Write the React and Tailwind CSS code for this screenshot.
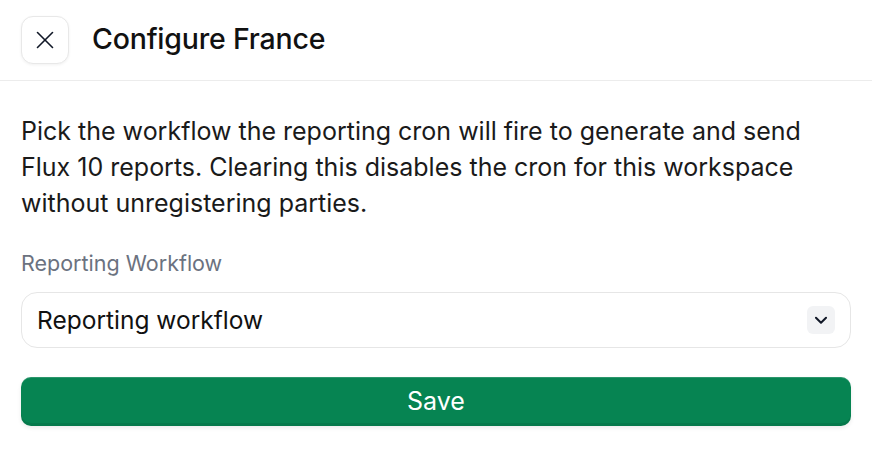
import React from "react";

function XIcon() {
  return (
    <svg width="18" height="18" viewBox="0 0 18 18" fill="none" stroke="#111827" strokeWidth="1.6" strokeLinecap="round">
      <path d="M16.5 1.5 1.5 16.5" />
      <path d="m1.5 1.5 15 15" />
    </svg>
  );
}

function ChevronDown() {
  return (
    <svg width="22" height="22" viewBox="0 0 24 24" fill="none" stroke="#111827" strokeWidth="2.2" strokeLinecap="round" strokeLinejoin="round">
      <path d="m6.5 9.5 5.5 5.5 5.5-5.5" />
    </svg>
  );
}

export default function App() {
  return (
    <div className="w-[872px] h-[458px] bg-white text-[#111111]" style={{ fontFamily: "Inter, 'Noto Sans', sans-serif" }}>
      <div className="flex items-center gap-[23px] h-[81px] px-[21px] border-b border-[#ececec]">
        <button className="w-[48px] h-[48px] flex items-center justify-center rounded-[12px] border border-[#e8e8e8] bg-white shadow-[0_1px_3px_rgba(0,0,0,0.06)]">
          <XIcon />
        </button>
        <h1 className="text-[28.5px] font-medium tracking-[-0.2px] text-[#111111] -mt-[2px]">Configure France</h1>
      </div>
      <div className="px-[21px] pt-[32px]">
        <p className="text-[25px] leading-[36px] text-[#1a1a1a]">
          Pick the workflow the reporting cron will fire to generate and send Flux 10 reports. Clearing this disables the cron for this workspace without unregistering parties.
        </p>
        <div className="mt-[28px] text-[21.5px] leading-[28px] text-[#6b7280]">Reporting Workflow</div>
        <div className="mt-[15px] h-[56px] flex items-center justify-between pl-[15px] pr-[15px] rounded-[16px] border border-[#e6e6e6] bg-white">
          <span className="text-[24.5px] text-[#111111]">Reporting workflow</span>
          <span className="w-[28px] h-[28px] flex items-center justify-center rounded-[6px] bg-[#f2f3f5]">
            <ChevronDown />
          </span>
        </div>
        <button className="mt-[29px] w-full h-[49px] flex items-center justify-center rounded-[10px] bg-[#068452] text-white text-[25px] shadow-[inset_0_1px_0_rgba(255,255,255,0.15),inset_0_-3px_0_rgba(0,0,0,0.08),0_2px_4px_rgba(0,0,0,0.08)]">
          Save
        </button>
      </div>
    </div>
  );
}
